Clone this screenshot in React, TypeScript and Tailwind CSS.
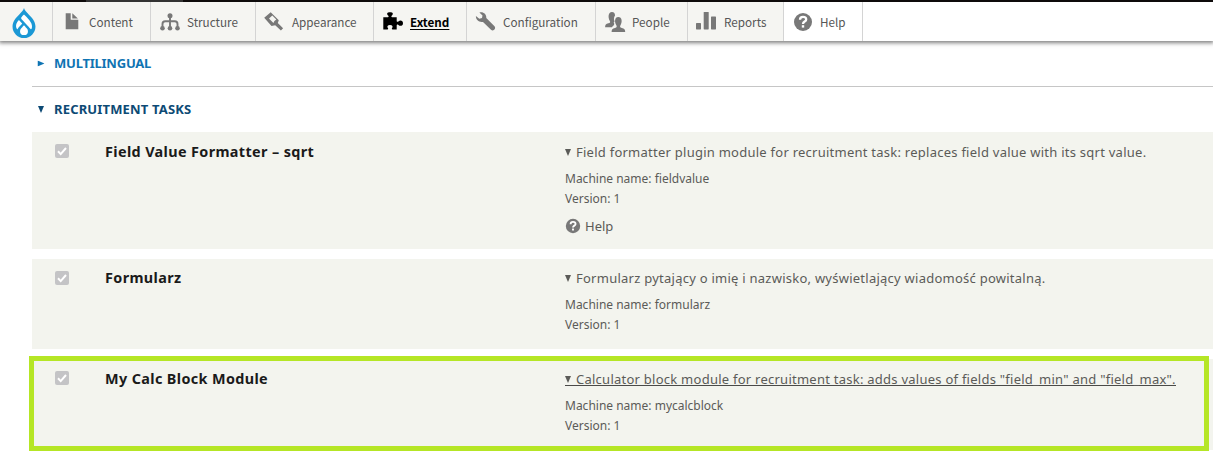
import type { ReactNode } from "react";

type Tab = { label: string; width: string; icon: ReactNode; active?: boolean; plain?: boolean };

const svg = (children: ReactNode) => (
  <svg viewBox="0 0 20 20" className="h-5 w-5 shrink-0 overflow-visible fill-current">
    {children}
  </svg>
);

const tabs: Tab[] = [
  {
    label: "Content",
    width: "w-[98px]",
    icon: svg(<path d="M3.7 1.3h5v6.4h7.6v9.6H3.7zM10.3 1.3l5.6 5.1h-5.6z" />),
  },
  {
    label: "Structure",
    width: "w-[105px]",
    icon: svg(
      <>
        <path d="M10 4v12.5M2.5 16.5V12q0-2.7 2.7-2.7h9.6q2.7 0 2.7 2.7v4.5" fill="none" stroke="currentColor" strokeWidth="1.9" />
        <circle cx="10" cy="3.8" r="2.5" />
        <circle cx="2.5" cy="16.3" r="2.3" />
        <circle cx="10" cy="16.3" r="2.3" />
        <circle cx="17.5" cy="16.3" r="2.3" />
      </>,
    ),
  },
  {
    label: "Appearance",
    width: "w-[118px]",
    icon: svg(
      <>
        <path d="M-.8 5.7L5.7.3l8.100 8-1 2.600 5.300 5.300-2.200 2.400-5.700-5.300-3.700.7z" />
        <path d="M4 6.600L7.300 3.600l4 4q-2.300 1-2.900 3.500z" className="fill-[#f5f5f2]" />
      </>,
    ),
  },
  {
    label: "Extend",
    width: "w-[93px]",
    active: true,
    icon: svg(
      <path d="M.3 5.3h4.6c.9 0 1-1 .2-1.7C3.400 2 4 .3 7 .3s3.600 1.700 1.900 3.300c-.8.7-.7 1.700.2 1.700h4.600v3.600c0 .9.9 1.200 1.700.5 1.800-1.600 4.600-1 4.600 1.800s-2.800 3.400-4.600 1.800c-.8-.7-1.700-.4-1.700.5v3.900H9.600c-.8 0-1-.7-.5-1.300 1.200-1.400.3-3-2.100-3s-3.300 1.600-2.100 3c.5.6.3 1.300-.5 1.300H.3z" />,
    ),
  },
  {
    label: "Configuration",
    width: "w-[129px]",
    icon: svg(
      <path d="M3.400.5C6.800-.7 10.700 1.800 10.300 5.900l8.200 8.400c2 2.300-1.200 5.500-3.500 3.500L7 9.900C3.400 10.700-.2 8.200-.1 4.100L3.300 6.700 6 6.100 6.500 3.400z" />,
    ),
  },
  {
    label: "People",
    width: "w-[92px]",
    icon: svg(
      <>
        <path d="M6.900.1c2.200 0 3.200 1.500 3.100 3.600-1.200 1.300-1.300 3.400-.6 5.300.2.900-.1 1.300-.8 1.600.8 1 .9 1.700.2 2.600-.8.700-1.500 1.200-1.900 2H.1c0-2.300.8-3.200 3.300-3.900 1.900-.5 2.200-1.300 1.300-2.600C3 6 3 .1 6.900.1z" />
        <path d="M13.300 5c3.900 0 4.100 5 2.300 8-.9 1.500-.7 2.500 1.200 3 2.600.7 3.400 1.600 3.400 4H6.600c0-2.400.8-3.300 3.400-4 1.900-.5 2.100-1.500 1.200-3-1.800-3-1.700-8 2.100-8z" />
      </>,
    ),
  },
  {
    label: "Reports",
    width: "w-[96px]",
    icon: svg(
      <>
        <rect x="-1" y="11" width="5" height="6.400" rx=".6" />
        <rect x="6.700" y="0" width="5" height="17.400" rx=".6" />
        <rect x="14" y="4.500" width="5" height="12.900" rx=".6" />
      </>,
    ),
  },
  { label: "Help", width: "w-[79px]", plain: true, icon: <HelpIcon className="h-5 w-5 shrink-0" /> },
];

function HelpIcon({ className }: { className: string }) {
  return (
    <svg viewBox="0 0 20 20" className={className}>
      <circle cx="10" cy="10" r="9" className="fill-[#787878]" />
      <path d="M7 7.800C7 5.700 8.300 4.800 10 4.800s3.200.9 3.200 2.600c0 2.300-3.200 2-3.200 4.500" fill="none" stroke="#fff" strokeWidth="2.300" />
      <rect x="8.800" y="13.200" width="2.400" height="2.400" fill="#fff" />
    </svg>
  );
}

function Toolbar() {
  return (
    <header className="h-[41px] bg-white shadow-[0_1px_4px_1px_rgba(0,0,0,0.5)]">
      <div className="flex h-[2px] bg-[#0e0b0b]">
        <div className="ml-[86px] w-[97px] bg-[#333]" />
      </div>
      <nav className="flex h-[39px] font-['Noto_Sans_CJK_SC','Noto_Sans',sans-serif] text-[11.7px] text-[#565656]">
        <div className="flex w-[53px] justify-center border-r border-[#d4d4d4] bg-[#f5f5f2] pr-[4px] pt-[6px]">
          <svg viewBox="2.800 0 18.400 24" className="h-[30px] w-6">
            <path d="M12 2L4.500 11v7L12 23l7.500-5v-7z" fill="#fff" />
            <path
              fill="#1b98d5"
              d="M15.78 5.113C14.09 3.425 12.48 1.815 11.998 0c-.48 1.815-2.09 3.425-3.778 5.113-2.534 2.53-5.405 5.4-5.405 9.702a9.184 9.185 0 1 0 18.368 0c0-4.303-2.871-7.171-5.405-9.702M6.72 16.954c-.563-.019-2.64-3.6 1.215-7.416l2.55 2.788a.218.218 0 0 1-.016.325c-.61.625-3.204 3.227-3.527 4.126-.066.186-.164.18-.222.177M12 21.677a3.158 3.158 0 0 1-3.158-3.159 3.291 3.291 0 0 1 .787-2.087c.57-.696 2.37-2.655 2.37-2.655s1.774 1.988 2.367 2.649a3.09 3.09 0 0 1 .792 2.093A3.158 3.158 0 0 1 12 21.677m6.046-5.123c-.068.15-.223.398-.431.405-.371.014-.411-.177-.686-.583-.602-.892-5.864-6.39-6.848-7.455-.866-.935-.122-1.595.223-1.94C10.736 6.547 12 5.285 12 5.285s3.766 3.573 5.336 6.016c1.57 2.443 1.029 4.556.71 5.253"
            />
          </svg>
        </div>
        {tabs.map((t) => (
          <a
            key={t.label}
            className={`flex items-center gap-[7px] whitespace-nowrap border-r border-[#d4d4d4] pl-[9px] ${t.width} ${t.plain ? "bg-white" : "bg-[#f5f5f2]"}`}
          >
            <span className={t.active ? "text-black" : "text-[#787878]"}>{t.icon}</span>
            <span className={t.active ? "font-bold text-black underline decoration-1 underline-offset-2" : ""}>{t.label}</span>
          </a>
        ))}
      </nav>
    </header>
  );
}

function Check() {
  return (
    <span className="mt-3 flex h-[14px] w-[14px] items-center justify-center rounded-[2px] bg-[#c4c4c6]">
      <svg viewBox="0 0 14 14" className="h-[14px] w-[14px]">
        <path d="M3 7.300l2.700 2.800L11 4" fill="none" stroke="#fff" strokeWidth="2" />
      </svg>
    </span>
  );
}

function Triangle({ className = "" }: { className?: string }) {
  return (
    <svg viewBox="0 0 6 7" className={`inline-block h-[7px] w-[6px] fill-current ${className}`}>
      <path d="M0 0h6L3 7z" />
    </svg>
  );
}

type Mod = { title: string; text: string; machine: string; height: string; pad: string; help?: boolean; hover?: boolean };

const modules: Mod[] = [
  {
    title: "Field Value Formatter – sqrt",
    text: "Field formatter plugin module for recruitment task: replaces field value with its sqrt value.",
    machine: "fieldvalue",
    height: "h-[117px] mb-[10px]",
    pad: "pt-[10px]",
    help: true,
  },
  {
    title: "Formularz",
    text: "Formularz pytający o imię i nazwisko, wyświetlający wiadomość powitalną.",
    machine: "formularz",
    height: "h-[90px] mb-[10px]",
    pad: "pt-[9px]",
  },
  {
    title: "My Calc Block Module",
    text: 'Calculator block module for recruitment task: adds values of fields "field_min" and "field_max".',
    machine: "mycalcblock",
    height: "h-[91px] relative",
    pad: "pt-[10px]",
    hover: true,
  },
];

function ModuleRow({ m }: { m: Mod }) {
  return (
    <section className={`flex bg-[#f3f4ee] pl-[23px] ${m.height}`}>
      <div className="w-[50px]">
        <Check />
      </div>
      <h3 className={`w-[460px] text-[14.4px] leading-5 font-bold tracking-[0.37px] text-[#1a1a1a] ${m.pad}`}>{m.title}</h3>
      <div className={`whitespace-nowrap text-[12px] text-[#5b5b58] ${m.pad}`}>
        <p className="flex h-5 items-start text-[13px] leading-5 tracking-[0.25px]">
          <span className={m.hover ? "h-[17px] border-b border-[#4a4a48]" : ""}>
            <span className="flex h-5 items-center">
              <Triangle className="mr-[5px]" />
              {m.text}
            </span>
          </span>
        </p>
        <p className="mt-[7px] leading-5">Machine name: {m.machine}</p>
        <p className="leading-5">Version: 1</p>
        {m.help && (
          <p className="mt-[7px] flex items-center gap-1 text-[13px] leading-5">
            <HelpIcon className="h-4 w-4" />
            Help
          </p>
        )}
      </div>
      {m.hover && <div className="absolute -top-[3px] -left-[3px] h-[95px] w-[1180px] border-5 border-[#b5e625]" />}
    </section>
  );
}

export default function App() {
  return (
    <div className="h-[472px] overflow-hidden bg-white">
      <Toolbar />
      <main className="pl-8 font-['Noto_Sans','Open_Sans',sans-serif]">
        <h2 className="flex h-[46px] items-center border-b border-[#c6c6c6] pl-[6px] text-[13px] font-bold tracking-[-0.23px] text-[#0f74b3]">
          <Triangle className="mr-[10px] -rotate-90" />
          MULTILINGUAL
        </h2>
        <h2 className="flex h-[45px] items-center pl-[6px] text-[13px] font-bold tracking-[0.16px] text-[#0d4a75]">
          <Triangle className="mr-[10px]" />
          RECRUITMENT TASKS
        </h2>
        {modules.map((m) => (
          <ModuleRow key={m.machine} m={m} />
        ))}
      </main>
    </div>
  );
}
